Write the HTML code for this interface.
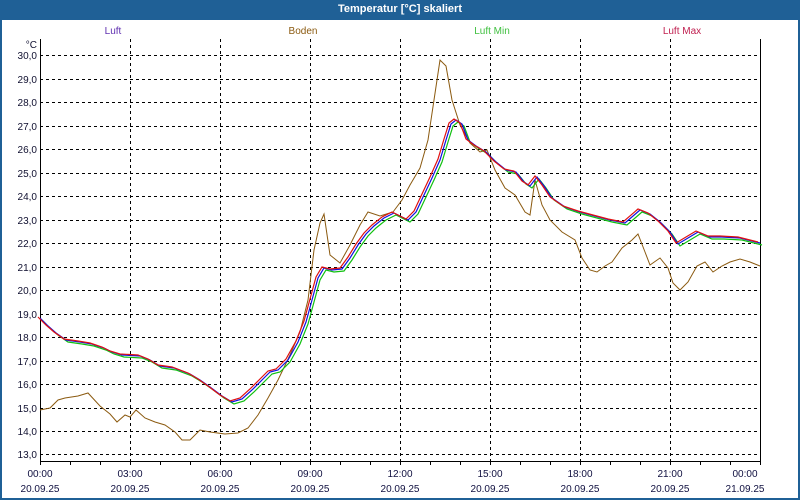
<!DOCTYPE html>
<html><head><meta charset="utf-8"><style>
html,body{margin:0;padding:0;background:#fff;}
body{width:800px;height:500px;overflow:hidden;position:relative;font-family:"Liberation Sans",sans-serif;}
.frame{position:absolute;left:0;top:0;width:796px;height:478px;border:2px solid #1f6096;border-top:20px solid #1f6096;}
.title{position:absolute;left:0;top:3px;width:800px;text-align:center;color:#fff;font-weight:bold;font-size:11px;}
svg{position:absolute;left:0;top:0;}
text{font-family:"Liberation Sans",sans-serif;font-size:10px;}
</style></head><body>
<div class="frame"></div>
<div class="title">Temperatur [°C] skaliert</div>
<svg width="800" height="500" viewBox="0 0 800 500">
<defs>
<path id="m" d="M40 318 L48 326 L56 333 L66 340 L80 342 L92 344 L104 348 L112 352 L122 355 L140 356 L150 360 L160 366 L174 368 L190 374 L200 380 L210 387 L222 396 L232 402 L242 399 L252 390 L262 380 L270 372 L278 370 L288 360 L298 342 L306 322 L312 300 L318 278 L324 268 L332 270 L342 269 L350 258 L358 245 L366 234 L374 226 L384 218 L394 213 L400 216 L408 220 L416 212 L424 195 L432 178 L440 160 L446 140 L451 124 L456 120 L462 124 L468 140 L476 146 L486 152 L496 162 L506 170 L516 172 L524 182 L530 186 L537 177 L544 186 L552 198 L565 207 L580 212 L595 216 L610 220 L625 223 L640 210 L650 214 L660 222 L670 232 L678 244 L688 238 L698 232 L710 237 L722 237 L740 238 L760 243"/>
</defs>
<g>
<text x="113" y="34" text-anchor="middle" fill="#6030b0">Luft</text>
<text x="303" y="34" text-anchor="middle" fill="#8b5a10">Boden</text>
<text x="492" y="34" text-anchor="middle" fill="#40c040">Luft Min</text>
<text x="682" y="34" text-anchor="middle" fill="#c02050">Luft Max</text>
</g>
<g stroke="#000" stroke-width="1" stroke-dasharray="3,3" shape-rendering="crispEdges">
<line x1="40" x2="760" y1="55.5" y2="55.5"/><line x1="40" x2="760" y1="79.5" y2="79.5"/>
<line x1="40" x2="760" y1="102.5" y2="102.5"/><line x1="40" x2="760" y1="126.5" y2="126.5"/>
<line x1="40" x2="760" y1="149.5" y2="149.5"/><line x1="40" x2="760" y1="173.5" y2="173.5"/>
<line x1="40" x2="760" y1="196.5" y2="196.5"/><line x1="40" x2="760" y1="220.5" y2="220.5"/>
<line x1="40" x2="760" y1="243.5" y2="243.5"/><line x1="40" x2="760" y1="267.5" y2="267.5"/>
<line x1="40" x2="760" y1="290.5" y2="290.5"/><line x1="40" x2="760" y1="314.5" y2="314.5"/>
<line x1="40" x2="760" y1="337.5" y2="337.5"/><line x1="40" x2="760" y1="361.5" y2="361.5"/>
<line x1="40" x2="760" y1="384.5" y2="384.5"/><line x1="40" x2="760" y1="408.5" y2="408.5"/>
<line x1="40" x2="760" y1="431.5" y2="431.5"/><line x1="40" x2="760" y1="454.5" y2="454.5"/>
<line x1="130.5" x2="130.5" y1="39" y2="461"/><line x1="220.5" x2="220.5" y1="39" y2="461"/>
<line x1="310.5" x2="310.5" y1="39" y2="461"/><line x1="400.5" x2="400.5" y1="39" y2="461"/>
<line x1="490.5" x2="490.5" y1="39" y2="461"/><line x1="580.5" x2="580.5" y1="39" y2="461"/>
<line x1="670.5" x2="670.5" y1="39" y2="461"/>
</g>
<g stroke="#000" stroke-width="1" shape-rendering="crispEdges">
<line x1="40.5" x2="40.5" y1="39" y2="465"/><line x1="760.5" x2="760.5" y1="39" y2="465"/>
<line x1="40" x2="761" y1="461.5" y2="461.5"/>
<path d="M70.5 461v4M100.5 461v4M130.5 461v4M160.5 461v4M190.5 461v4M220.5 461v4M250.5 461v4M280.5 461v4M310.5 461v4M340.5 461v4M370.5 461v4M400.5 461v4M430.5 461v4M460.5 461v4M490.5 461v4M520.5 461v4M550.5 461v4M580.5 461v4M610.5 461v4M640.5 461v4M670.5 461v4M700.5 461v4M730.5 461v4"/>
</g>
<g fill="#101030" text-anchor="end">
<text x="37" y="48">°C</text>
<text x="37" y="59">30,0</text><text x="37" y="83">29,0</text><text x="37" y="106">28,0</text><text x="37" y="130">27,0</text>
<text x="37" y="153">26,0</text><text x="37" y="177">25,0</text><text x="37" y="200">24,0</text><text x="37" y="224">23,0</text>
<text x="37" y="247">22,0</text><text x="37" y="271">21,0</text><text x="37" y="294">20,0</text><text x="37" y="318">19,0</text>
<text x="37" y="341">18,0</text><text x="37" y="365">17,0</text><text x="37" y="388">16,0</text><text x="37" y="412">15,0</text>
<text x="37" y="435">14,0</text><text x="37" y="458">13,0</text>
</g>
<g fill="#101040" text-anchor="middle">
<text x="40" y="477">00:00</text><text x="130" y="477">03:00</text><text x="220" y="477">06:00</text><text x="310" y="477">09:00</text><text x="400" y="477">12:00</text><text x="490" y="477">15:00</text><text x="580" y="477">18:00</text><text x="670" y="477">21:00</text><text x="745" y="477">00:00</text>
<text x="40" y="492">20.09.25</text><text x="130" y="492">20.09.25</text><text x="220" y="492">20.09.25</text><text x="310" y="492">20.09.25</text><text x="400" y="492">20.09.25</text><text x="490" y="492">20.09.25</text><text x="580" y="492">20.09.25</text><text x="670" y="492">20.09.25</text><text x="745" y="492">21.09.25</text>
</g>
<path fill="none" stroke="#8b5a10" stroke-width="1" d="M40 410 L50 408 L58 400 L65 398 L78 396 L88 393 L100 406 L110 414 L117 422 L125 415 L130 417 L136 410 L145 418 L155 422 L165 425 L175 432 L182 440 L190 440 L200 430 L210 432 L225 434 L238 433 L248 428 L258 415 L268 398 L278 380 L290 355 L300 332 L308 300 L314 250 L320 223 L324 214 L330 255 L340 263 L350 245 L360 225 L368 212 L380 216 L393 212 L402 200 L410 185 L420 168 L428 140 L434 100 L440 60 L446 66 L452 100 L460 125 L470 143 L480 152 L487 150 L495 170 L505 188 L515 195 L525 212 L530 215 L535 180 L542 205 L550 220 L562 232 L575 240 L582 258 L590 270 L597 272 L605 266 L612 262 L622 248 L632 240 L638 234 L645 252 L650 265 L660 258 L668 268 L673 283 L680 290 L688 282 L697 266 L705 262 L713 272 L722 266 L730 262 L740 259 L750 262 L760 266"/>
<g fill="none" stroke-width="1.2">
<use href="#m" stroke="#10c010" transform="translate(2,2)"/>
<use href="#m" stroke="#1010e0"/>
<use href="#m" stroke="#e01010" transform="translate(-2,-1)"/>
</g>
</svg>
</body></html>
